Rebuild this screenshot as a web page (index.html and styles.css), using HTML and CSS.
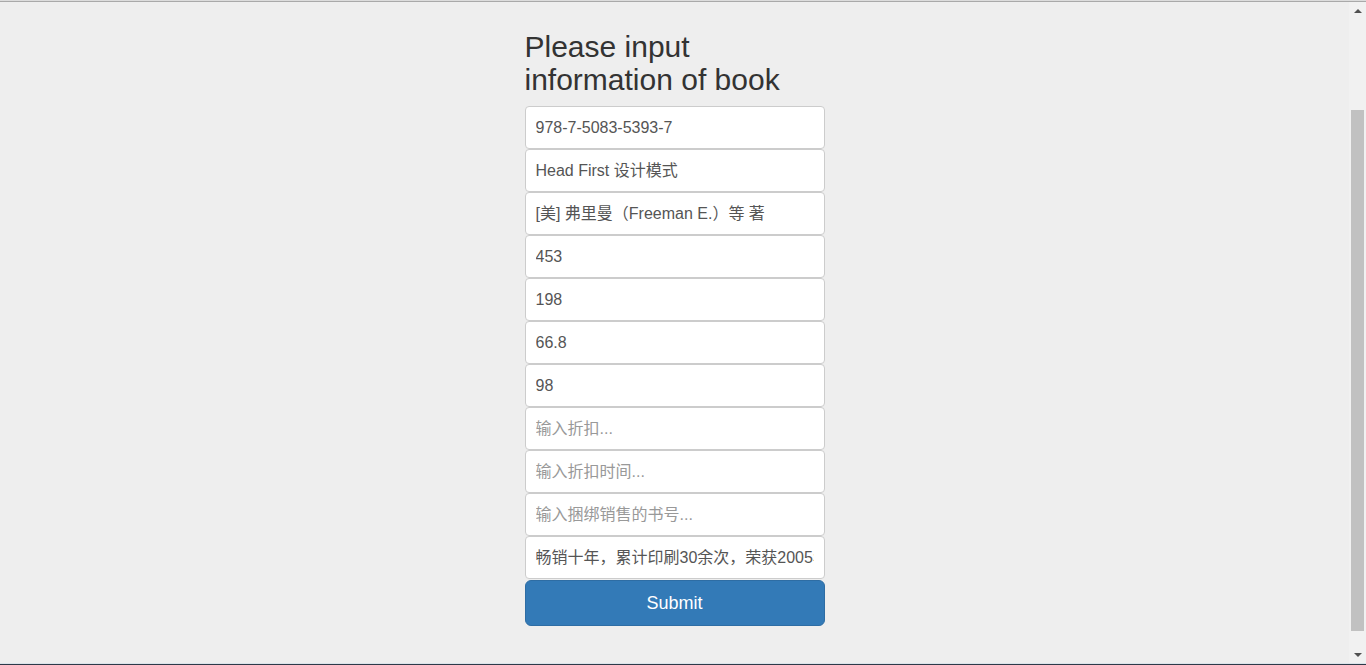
FILE: index.html
```html
<!DOCTYPE html>
<html lang="zh">
<head>
<meta charset="utf-8">
<title>Book</title>
<link rel="stylesheet" href="styles.css">
</head>
<body>
<div class="frame">
  <div class="topline"></div>
  <div class="middle">
    <main class="main">
      <form class="book-form">
        <h2 class="title">Please input information of book</h2>
        <input class="field" type="text" value="978-7-5083-5393-7">
        <input class="field field-mixed" type="text" value="Head First 设计模式">
        <input class="field field-mixed" type="text" value="[美] 弗里曼（Freeman E.）等 著">
        <input class="field" type="text" value="453">
        <input class="field" type="text" value="198">
        <input class="field" type="text" value="66.8">
        <input class="field" type="text" value="98">
        <input class="field" type="text" placeholder="输入折扣...">
        <input class="field" type="text" placeholder="输入折扣时间...">
        <input class="field" type="text" placeholder="输入捆绑销售的书号...">
        <input class="field field-mixed" type="text" value="畅销十年，累计印刷30余次，荣获2005年第十五届Jolt通用类图书震撼大奖">
        <button class="submit" type="button">Submit</button>
      </form>
    </main>
    <div class="scrollbar">
      <div class="arrow-box"><span class="arrow-up"></span></div>
      <div class="track"><div class="thumb"></div></div>
      <div class="arrow-box"><span class="arrow-down"></span></div>
    </div>
  </div>
  <div class="bottomline"></div>
</div>
</body>
</html>
```
FILE: styles.css
```css
html, body {
  margin: 0;
  padding: 0;
}
body {
  font-family: "Liberation Sans", Arial, "Noto Sans CJK SC", sans-serif;
  background: #eeeeee;
  color: #333;
}
.frame {
  height: 665px;
  display: flex;
  flex-direction: column;
  overflow: hidden;
}
.topline {
  height: 1px;
  background: #dcdcdc;
  border-bottom: 1px solid #a9a9a9;
}
.middle {
  flex: 1;
  display: flex;
  min-height: 0;
}
.main {
  flex: 1;
  display: flex;
  justify-content: center;
  padding-top: 28px;
}
.book-form {
  width: 300px;
  display: flex;
  flex-direction: column;
}
.title {
  margin: 0 0 10px;
  font-size: 30px;
  line-height: 33px;
  font-weight: 500;
  color: #333;
  padding-right: 40px;
}
.field {
  box-sizing: border-box;
  width: 300px;
  height: 43px;
  margin: 0;
  padding: 10px;
  border: 1px solid #cccccc;
  border-radius: 4px;
  background: #fff;
  font-family: "Liberation Sans", Arial, "Noto Sans CJK SC", sans-serif;
  font-size: 16px;
  line-height: 21px;
  color: #555;
  outline: none;
}
.field-mixed {
  padding-top: 8px;
  padding-bottom: 12px;
}
.field::placeholder {
  color: #999;
}
.submit {
  box-sizing: border-box;
  margin-top: 1px;
  width: 300px;
  height: 46px;
  border: 1px solid #2e6da4;
  border-radius: 6px;
  background: #337ab7;
  color: #fff;
  font-family: "Liberation Sans", Arial, sans-serif;
  font-size: 18px;
  padding: 0;
}
.scrollbar {
  width: 17px;
  background: #f1f1f1;
  display: flex;
  flex-direction: column;
}
.arrow-box {
  height: 17px;
  display: flex;
  align-items: center;
  justify-content: center;
}
.arrow-up {
  width: 0;
  height: 0;
  border-left: 4px solid transparent;
  border-right: 4px solid transparent;
  border-bottom: 4px solid #505050;
}
.arrow-down {
  width: 0;
  height: 0;
  border-left: 4px solid transparent;
  border-right: 4px solid transparent;
  border-top: 4px solid #505050;
}
.track {
  flex: 1;
  padding: 0 2px;
}
.thumb {
  margin-top: 91px;
  height: 521px;
  background: #c1c1c1;
}
.bottomline {
  height: 1px;
  background: #dbe3ea;
  border-bottom: 1px solid #2d3a48;
}
```
